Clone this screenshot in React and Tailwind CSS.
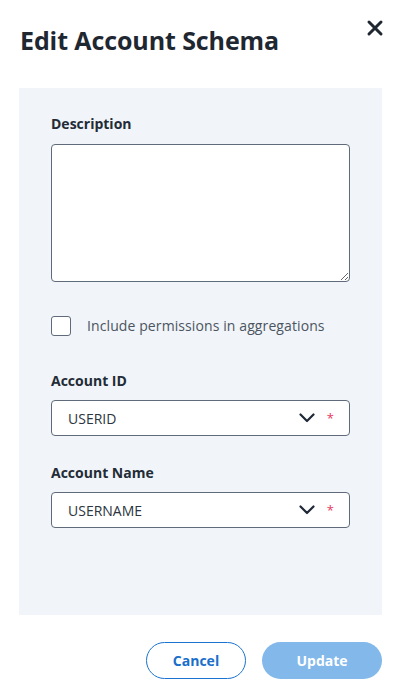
import { useState } from 'react';

function Chevron() {
  return (
    <svg width="16" height="10" viewBox="0 0 16 10" fill="none">
      <path d="M1.5 1.5 L8 8 L14.5 1.5" stroke="#1f2937" strokeWidth="2.2" strokeLinecap="round" strokeLinejoin="round" />
    </svg>
  );
}

function SelectBox({ value }) {
  return (
    <div className="flex items-center h-[36px] bg-white border border-[#5f6b7a] rounded-[4px] pl-[16px] pr-[15px]">
      <span className="flex-1 text-[14px] text-[#2b3440]">{value}</span>
      <Chevron />
      <span className="ml-[12px] text-[13px] text-[#e8395f] leading-none">*</span>
    </div>
  );
}

export default function App() {
  const [desc, setDesc] = useState("");
  const [checked, setChecked] = useState(false);

  return (
    <div className="w-[400px] h-[690px] bg-white flex flex-col font-['Open_Sans','Noto_Sans',sans-serif] text-[#1f2937]">
      {/* header */}
      <div className="flex items-start justify-between pl-[20px] pr-[16px] pt-[22px] h-[88px]">
        <h1 className="text-[25px] font-bold tracking-[-0.1px] text-[#1f2731] leading-[36px]">Edit Account Schema</h1>
        <svg className="mt-[-3px]" width="18" height="18" viewBox="0 0 18 18">
          <path d="M3 3 L15 15 M15 3 L3 15" stroke="#1f2731" strokeWidth="3" strokeLinecap="round" />
        </svg>
      </div>

      {/* body */}
      <div className="mx-[19px] w-[363px] h-[527px] bg-[#f1f4f8] pt-[26px] px-[32px]">
        <label className="block text-[14px] font-bold text-[#222b36] leading-[20px]">Description</label>
        <textarea
          value={desc}
          onChange={(e) => setDesc(e.target.value)}
          className="mt-[10px] block w-[299px] h-[138px] bg-white border border-[#5f6b7a] rounded-[4px] outline-none p-2 text-[14px]"
        />

        <label className="mt-[33px] flex items-center gap-[16px] cursor-pointer">
          <input
            type="checkbox"
            checked={checked}
            onChange={(e) => setChecked(e.target.checked)}
            className="appearance-none w-[20px] h-[20px] bg-white border border-[#5f6b7a] rounded-[3px]"
          />
          <span className="text-[14px] tracking-[0.1px] text-[#4b5561]">Include permissions in aggregations</span>
        </label>

        <div className="mt-[35px] text-[14px] font-bold text-[#222b36] leading-[20px]">Account ID</div>
        <div className="mt-[9px]">
          <SelectBox value="USERID" />
        </div>

        <div className="mt-[27px] text-[14px] font-bold text-[#222b36] leading-[20px]">Account Name</div>
        <div className="mt-[9px]">
          <SelectBox value="USERNAME" />
        </div>
      </div>

      {/* footer */}
      <div className="flex justify-end gap-[16px] pr-[18px] pt-[27px]">
        <button className="w-[100px] h-[37px] rounded-full border border-[#1a73d0] text-[#1a6fcb] text-[14px] font-bold bg-white">
          Cancel
        </button>
        <button className="w-[120px] h-[37px] rounded-full bg-[#82b8ea] text-white text-[14px] font-bold">
          Update
        </button>
      </div>
    </div>
  );
}
